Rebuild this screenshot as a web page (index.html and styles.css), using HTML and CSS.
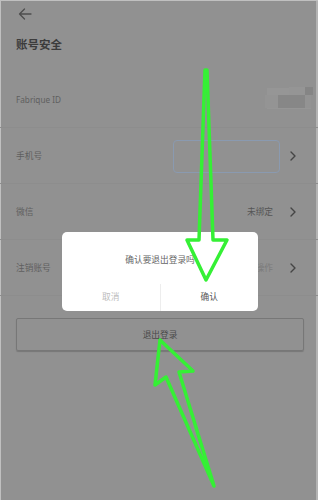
FILE: index.html
```html
<!DOCTYPE html>
<html lang="zh-CN">
<head>
<meta charset="utf-8">
<title>账号安全</title>
<link rel="stylesheet" href="styles.css">
</head>
<body>
<div class="screen">
  <div class="topbar">
    <svg class="back" width="14" height="12" viewBox="0 0 14 12"><path d="M13 6H1.5M6.5 1L1.5 6l5 5" fill="none" stroke="#4e4e4e" stroke-width="1.3" stroke-linecap="round" stroke-linejoin="round"/></svg>
  </div>
  <div class="title">账号安全</div>
  <div class="list">
    <div class="row">
      <span class="label latin">Fabrique ID</span>
      <svg class="mosaic" width="48" height="24" viewBox="0 0 48 24">
        <rect x="2" y="2" width="44" height="21" fill="#969696"/>
        <rect x="0" y="9" width="14" height="13" fill="#949494"/>
        <rect x="13" y="9" width="27" height="13" fill="#878787"/>
        <rect x="40" y="1" width="8" height="8" fill="#858585"/>
        <rect x="40" y="9" width="6" height="13" fill="#939393"/>
        <rect x="24" y="1" width="16" height="8" fill="#959595"/>
      </svg>
    </div>
    <div class="row">
      <span class="label">手机号</span>
      <span class="phonebox"></span>
      <svg class="chev" width="6" height="10" viewBox="0 0 6 10"><path d="M1 1l4 4-4 4" fill="none" stroke="#454545" stroke-width="1.4" stroke-linecap="round" stroke-linejoin="round"/></svg>
    </div>
    <div class="row">
      <span class="label">微信</span>
      <span class="value">未绑定</span>
      <svg class="chev" width="6" height="10" viewBox="0 0 6 10"><path d="M1 1l4 4-4 4" fill="none" stroke="#454545" stroke-width="1.4" stroke-linecap="round" stroke-linejoin="round"/></svg>
    </div>
    <div class="row">
      <span class="label">注销账号</span>
      <span class="value muted">谨慎操作</span>
      <svg class="chev" width="6" height="10" viewBox="0 0 6 10"><path d="M1 1l4 4-4 4" fill="none" stroke="#454545" stroke-width="1.4" stroke-linecap="round" stroke-linejoin="round"/></svg>
    </div>
  </div>
  <div class="logout">退出登录</div>

  <div class="dialog">
    <div class="dialog-msg">确认要退出登录吗</div>
    <div class="dialog-actions">
      <span class="btn cancel">取消</span>
      <span class="btn ok">确认</span>
    </div>
  </div>

  <svg class="arrows" width="318" height="500" viewBox="0 0 318 500">
    <polygon points="205,70 199,240 187,240 206,280 227,240 213,240 207,70" fill="none" stroke="#35f035" stroke-width="3.5" stroke-linejoin="round"/>
    <polygon points="160,340 193,371 179,372 214,486 166,377 155,385" fill="none" stroke="#35f035" stroke-width="3.5" stroke-linejoin="round"/>
  </svg>
</div>
</body>
</html>
```

FILE: styles.css
```css
* { box-sizing: border-box; }
html, body { margin: 0; padding: 0; }
body {
  width: 318px;
  height: 500px;
  overflow: hidden;
  background: #919191;
  font-family: "Noto Sans CJK SC", "Noto Sans", sans-serif;
}
.screen {
  position: relative;
  width: 318px;
  height: 500px;
  box-shadow: inset 1px 1px 0 #c0c0c0, inset -2px 0 0 #b3b3b3;
}
.topbar {
  height: 28px;
  display: flex;
  align-items: center;
  padding-left: 18px;
}
.back { display: block; }
.title {
  padding: 8px 16px 20px;
  height: 44px;
  line-height: 16px;
  font-size: 11.5px;
  font-weight: 700;
  color: #3c3c3c;
}
.row {
  height: 56px;
  border-bottom: 1px solid #8d8d8d;
  display: flex;
  align-items: center;
  padding: 0 22px 0 16px;
}
.label {
  font-size: 8.7px;
  color: #5f5f5f;
  margin-right: auto;
}
.label.latin { font-family: "Noto Sans", sans-serif; font-size: 8.2px; }
.mosaic { display: block; margin-right: -17px; margin-top: -4px; }
.phonebox {
  width: 107px;
  height: 33px;
  border: 1.5px solid #8a9ab0;
  border-radius: 4px;
  margin-right: 10px;
  margin-top: 2px;
}
.value {
  font-size: 8.7px;
  color: #555;
  margin-right: 17px;
}
.value.muted { color: #7b7b7b; }
.chev { display: block; }
.logout {
  margin: 22px 14px 0 16px;
  height: 33px;
  border: 1px solid #777;
  border-radius: 2px;
  box-shadow: 0 1px 1px rgba(0,0,0,0.18);
  display: flex;
  align-items: center;
  justify-content: center;
  font-size: 8.7px;
  color: #4a4a4a;
}
.dialog {
  position: absolute;
  left: 62px;
  top: 232px;
  width: 196px;
  height: 79px;
  background: #fff;
  border-radius: 5px;
  display: flex;
  flex-direction: column;
}
.dialog-msg {
  height: 52px;
  display: flex;
  align-items: center;
  justify-content: center;
  padding-top: 2px;
  font-size: 8.7px;
  color: #666;
}
.dialog-actions {
  flex: 1;
  display: flex;
}
.btn {
  flex: 1;
  display: flex;
  align-items: center;
  justify-content: center;
  font-size: 8.7px;
  padding-bottom: 2px;
}
.cancel { color: #bdbdbd; border-right: 1px solid #ededed; }
.ok { color: #555; }
.arrows {
  position: absolute;
  left: 0;
  top: 0;
  pointer-events: none;
}
```
